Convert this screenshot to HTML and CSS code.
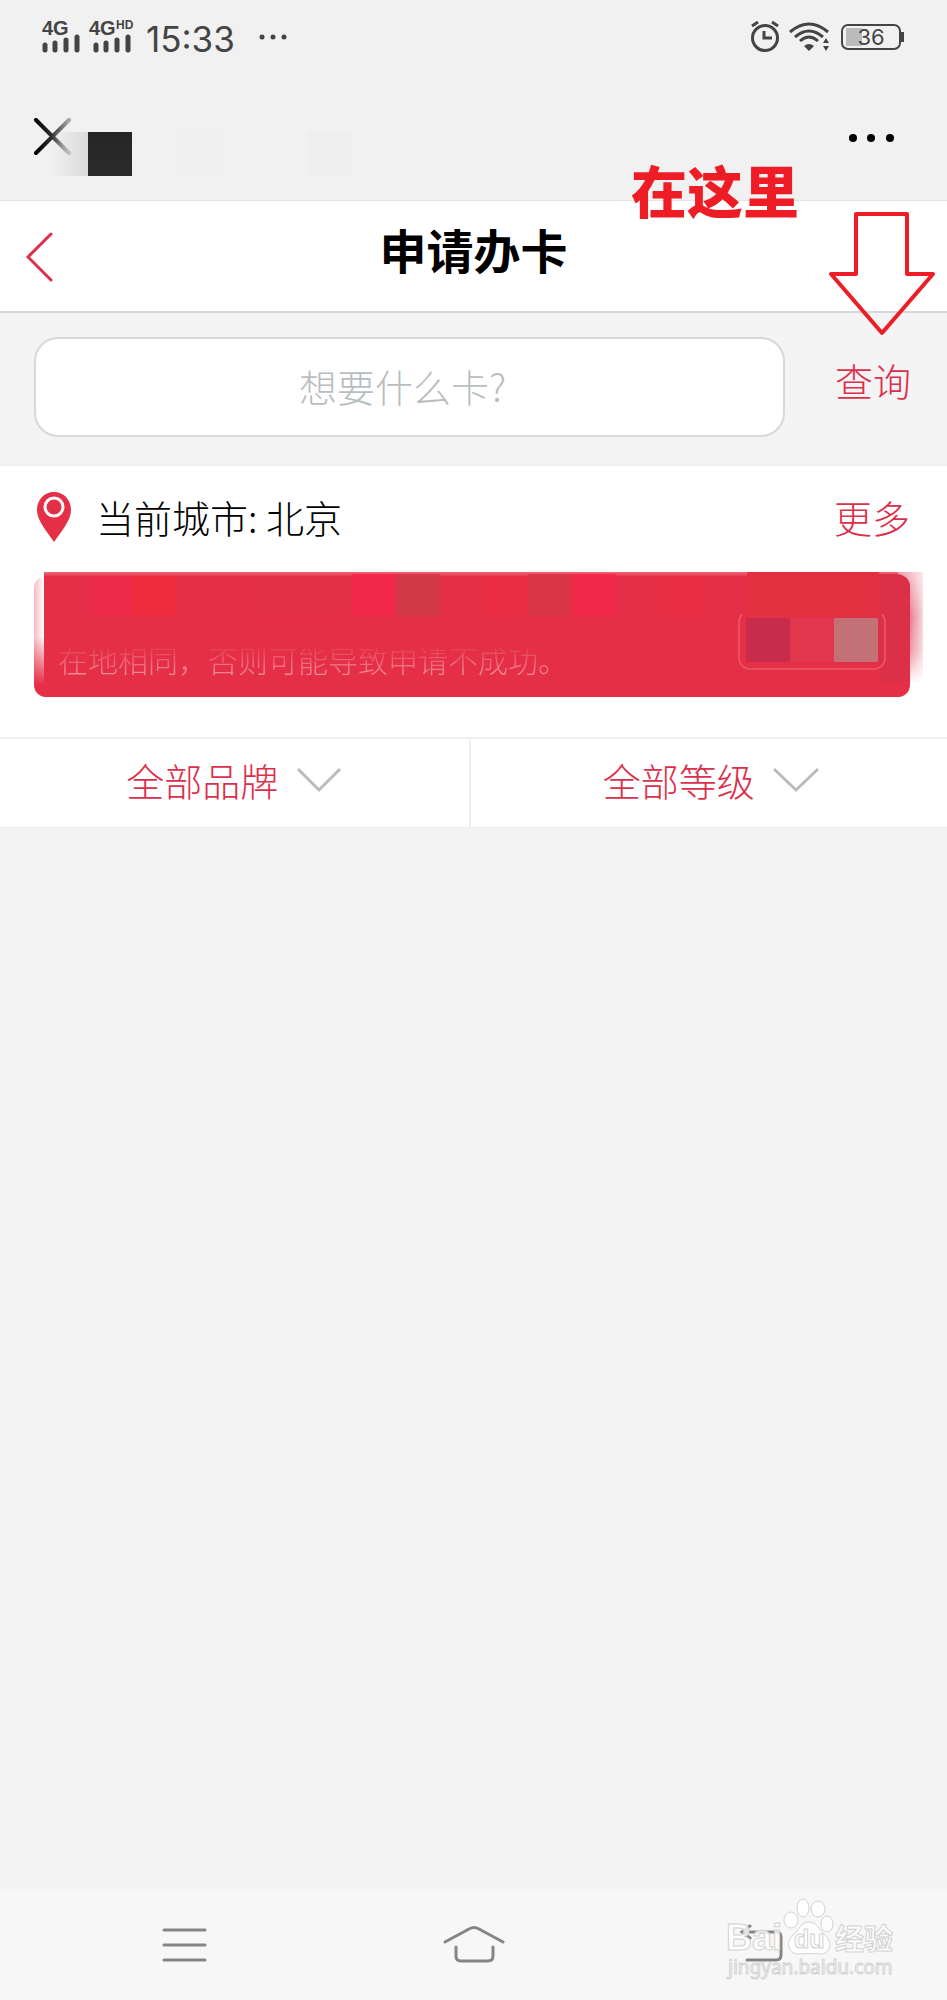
FILE: index.html
```
<!DOCTYPE html>
<html lang="zh-CN">

<head>
    <meta charset="UTF-8">
    <meta name="viewport" content="width=device-width, initial-scale=1.0">
    <title>申请办卡</title>
    <link rel="stylesheet" href="styles.css">
</head>

<body>
    <div class="status">
        <svg class="status__signal" width="94" height="44" viewBox="0 0 94 44">
            <text x="0" y="20" class="signal__text">4G</text>
            <text x="47" y="20" class="signal__text">4G</text>
            <text x="74" y="14" class="signal__hd">HD</text>
            <path d="M3 30v5M13 28v7M24 25v10M35 22v13M54 30v5M64 28v7M75 25v10M86 22v13" stroke="#444" stroke-width="5" stroke-linecap="round" />
        </svg>
        <span class="status__time">15:33</span>
        <svg class="status__more" width="30" height="8" viewBox="0 0 30 8" fill="#444">
            <circle cx="3" cy="4" r="2.500" />
            <circle cx="14" cy="4" r="2.500" />
            <circle cx="25" cy="4" r="2.500" />
        </svg>
        <svg class="status__icons" width="78" height="32" viewBox="0 0 78 32" fill="none" stroke="#444">
            <circle cx="14" cy="17" r="12.500" stroke-width="3" />
            <path d="M13 10v7h8M1 5l6-4M27 5l-6-4" stroke-width="3" />
            <path d="M39 11q19-16 38 0M44 16q14-12 28 0M49 20q9-8 18 0" stroke-width="3" />
            <path d="M53 25q5-4 10 0l-5 5zM72 22l3-5 3 5zM72 25l3 5 3-5z" fill="#444" stroke="none" />
        </svg>
        <div class="battery"><span>36</span></div>
    </div>

    <div class="appbar">
        <button type="button" class="icon-btn" aria-label="关闭">
            <svg width="38" height="38" viewBox="0 0 38 38">
                <defs>
                    <linearGradient id="fade">
                        <stop offset="0" stop-color="#000" />
                        <stop offset="0.500" stop-color="#333" />
                        <stop offset="1" stop-color="#aaa" />
                    </linearGradient>
                </defs>
                <path d="M2 2l33 33M35 2L2 35" stroke="url(#fade)" stroke-width="4" stroke-linecap="round" />
            </svg>
        </button>
        <div class="appbar__mask"></div>
        <button type="button" class="icon-btn" aria-label="更多选项">
            <svg width="46" height="12" viewBox="0 0 46 12">
                <circle cx="4" cy="7" r="4" />
                <circle cx="22" cy="7" r="4" />
                <circle cx="41" cy="7" r="4" />
            </svg>
        </button>
    </div>

    <header class="header">
        <a href="#" class="header__back" aria-label="返回">
            <svg width="27" height="52" viewBox="0 0 27 52" fill="none" stroke="#dc2f4b" stroke-width="3" stroke-linecap="round">
                <path d="M25 3L2 26l23 23" />
            </svg>
        </a>
        <h1>申请办卡</h1>
        <div class="tip">
            <strong>在这里</strong>
            <svg width="108" height="126" viewBox="0 0 108 126" fill="none" stroke="#ee1c25" stroke-width="4" stroke-linejoin="round">
                <path d="M28 3h51v60h26L54 122 3 63h25z" />
            </svg>
        </div>
    </header>

    <form class="search">
        <input type="text" name="card" placeholder="想要什么卡?" aria-label="想要什么卡">
        <button type="submit">查询</button>
    </form>

    <main class="city">
        <div class="city__row">
            <svg width="36" height="52" viewBox="0 0 36 52">
                <path d="M18 1C8 1 1 9 1 19c0 11 11 23 17 32 6-9 17-21 17-32C35 9 28 1 18 1z" fill="#e52f46" />
                <circle cx="18" cy="16" r="9" fill="#e52f46" stroke="#fff" stroke-width="3" />
            </svg>
            <span class="city__name">当前城市: 北京</span>
            <a href="#">更多</a>
        </div>
        <div class="banner">
            <svg class="banner__mask" viewBox="0 0 880 125" preserveAspectRatio="none">
                <defs>
                    <linearGradient id="edge">
                        <stop offset="0" stop-color="#d9304d" />
                        <stop offset="1" stop-color="#d9304d" stop-opacity="0.200" />
                    </linearGradient>
                    <linearGradient id="down" x2="0" y2="1">
                        <stop offset="0" stop-color="#777" />
                        <stop offset="0.400" stop-color="#fff" />
                        <stop offset="0.700" stop-color="#ccc" />
                        <stop offset="1" stop-color="#000" />
                    </linearGradient>
                    <linearGradient id="top" x2="0" y2="1">
                        <stop offset="0" stop-color="#ee6878" />
                        <stop offset="1" stop-color="#e52f46" />
                    </linearGradient>
                    <mask id="edgeFade">
                        <path d="M855 0h25v112h-25z" fill="url(#down)" />
                    </mask>
                </defs>
                <path d="M855 0h25v112h-25z" fill="url(#edge)" mask="url(#edgeFade)" />
                <path d="M0 0h855v5H0z" fill="url(#top)" />
                <path d="M0 4h855q12 0 12 12v96H0z" fill="#e52f46" />
                <path d="M44 4h44v40H44z" fill="#eb2a49" />
                <path d="M88 4h44v40H88z" fill="#ee2c3e" />
                <path d="M220 4h88v40h-88z" fill="#e23046" />
                <path d="M308 2h44v42h-44z" fill="#f12849" />
                <path d="M352 2h44v42h-44z" fill="#d23846" />
                <path d="M440 4h44v40h-44z" fill="#ea2d42" />
                <path d="M484 2h44v42h-44z" fill="#d93546" />
                <path d="M528 2h44v42h-44z" fill="#f02849" />
                <path d="M616 4h44v40h-44z" fill="#e92e44" />
                <path d="M704 0h132v44H704z" fill="#e23040" />
                <path d="M836 2h19q12 2 12 14v94h-31z" fill="#dc3049" />
            </svg>
            <p>在地相同，否则可能导致申请不成功。</p>
            <button type="button" class="banner__btn" aria-label="切换城市">
                <i></i><i></i><i></i>
            </button>
        </div>
    </main>

    <div class="filters">
        <button type="button">全部品牌
            <svg width="46" height="28" viewBox="0 0 46 28" fill="none" stroke="#bbb" stroke-width="3">
                <path d="M2 3l21 21L44 3" />
            </svg>
        </button>
        <button type="button">全部等级
            <svg width="46" height="28" viewBox="0 0 46 28" fill="none" stroke="#bbb" stroke-width="3">
                <path d="M1 3l22 21L45 3" />
            </svg>
        </button>
    </div>

    <nav class="nav">
        <button type="button" aria-label="菜单">
            <svg width="64" height="44" viewBox="0 0 64 44">
                <path d="M12 7h41M12 22h41M12 37h41" />
            </svg>
        </button>
        <button type="button" aria-label="主页">
            <svg width="64" height="44" viewBox="0 0 64 44">
                <path d="M3 19L27 6q5-3 10 0l24 13M14 24v9q0 5 5 5h27q5 0 5-5v-9" />
            </svg>
        </button>
        <button type="button" aria-label="返回">
            <svg width="64" height="44" viewBox="0 0 64 44">
                <path d="M19 3l-8 6 8 6M11 9h34q5 0 5 5v18q0 5-5 5H16" />
            </svg>
        </button>
        <svg class="logo" width="176" height="86" viewBox="0 0 176 86">
            <g fill="#fff" fill-opacity="0.800" stroke="#d2d2d2" stroke-width="1">
                <text x="0" y="52" class="logo__bai">Bai</text>
                <ellipse cx="65" cy="22" rx="7" ry="8" />
                <ellipse cx="77" cy="10" rx="6" ry="9" />
                <ellipse cx="92" cy="11" rx="7" ry="8" />
                <ellipse cx="101" cy="26" rx="6" ry="8" />
                <path d="M83 24c-8 0-10 8-16 13-7 6-6 18 5 19 5 0 16-1 22 0 10 0 13-11 6-18-7-6-9-14-17-14z" />
                <text x="68" y="50" class="logo__du">du</text>
                <text x="109" y="52" class="logo__cn">经验</text>
                <text x="2" y="76" class="logo__url">jingyan.baidu.com</text>
            </g>
        </svg>
    </nav>
</body>

</html>
```

FILE: styles.css
```
* {
    margin: 0;
    padding: 0;
    box-sizing: border-box;
}

body {
    min-height: 100vh;
    display: flex;
    flex-direction: column;
    background: #f4f4f4;
    font-family: "Noto Sans CJK SC", sans-serif;
    font-size: 38px;
    font-weight: 300;
    line-height: 56px;
    color: #000;
}

button,
input {
    font: inherit;
    border: 0;
    background: none;
}

button {
    cursor: pointer;
}

a {
    color: #dc2f4b;
    text-decoration: none;
}

svg {
    display: block;
    flex-shrink: 0;
}

/* phone status bar */
.status {
    display: flex;
    align-items: center;
    height: 74px;
    padding: 0 46px 0 42px;
    background: #f1f1f1;
    color: #444;
    font-family: Inter, sans-serif;
    font-weight: 400;
}

.signal__text {
    font: bold 20px "Liberation Sans", sans-serif;
    fill: #444;
}

.signal__hd {
    font: bold 12px "Liberation Sans", sans-serif;
    fill: #444;
}

.status__time {
    margin-left: 10px;
    padding-top: 4px;
    font-size: 35px;
    font-weight: 400;
}

.status__more {
    margin-left: 24px;
}

.status__icons {
    margin-left: auto;
}

.battery {
    position: relative;
    width: 60px;
    height: 26px;
    margin-left: 12px;
    border: 2px solid #444;
    border-radius: 7px;
    background: linear-gradient(#bbb, #bbb) 3px 2px / 16px 18px no-repeat;
    font-size: 22px;
    line-height: 22px;
    text-align: center;
}

.battery::after {
    content: "";
    position: absolute;
    right: -5px;
    top: 6px;
    width: 3px;
    height: 10px;
    background: #444;
}

/* webview bar */
.appbar {
    display: flex;
    align-items: center;
    height: 127px;
    padding: 0 52px 0 34px;
    background: #f1f1f1;
    border-bottom: 1px solid #e4e4e4;
}

.icon-btn {
    height: 38px;
}

.appbar__mask {
    align-self: flex-end;
    width: 300px;
    height: 44px;
    margin: 0 auto 24px -20px;
    background:
        linear-gradient(#262626, #2b2b2b) 36px 0 / 44px 44px no-repeat,
        linear-gradient(#eee, #eee) 256px 0 / 44px 44px no-repeat,
        linear-gradient(#f0f0f0, #f0f0f0) 124px 0 / 44px 40px no-repeat,
        linear-gradient(90deg, #dadada00, #dadada) 0 0 / 36px 44px no-repeat;
}

.header {
    position: relative;
    display: flex;
    align-items: center;
    justify-content: center;
    height: 112px;
    padding-bottom: 14px;
    background: #fff;
    border-bottom: 2px solid #d8d8d8;
}

.header h1 {
    font-size: 47px;
    font-weight: 700;
}

.header__back {
    position: absolute;
    left: 26px;
    top: 30px;
}

.tip {
    position: absolute;
    right: 11px;
    top: -48px;
    display: flex;
    gap: 29px;
    color: #ee1c25;
    pointer-events: none;
}

.tip strong {
    font-size: 56px;
    font-weight: 900;
    line-height: 72px;
}

.tip svg {
    margin-top: 58px;
}

.search {
    display: flex;
    align-items: center;
    gap: 50px;
    padding: 24px 36px 27px 34px;
    border-bottom: 2px solid #eee;
}

.search input {
    flex: 1;
    min-width: 0;
    height: 100px;
    padding: 0 14px 4px 0;
    border: 2px solid #d8d8d8;
    border-radius: 24px;
    background: #fff;
    text-align: center;
}

.search input::placeholder {
    color: #b8bdbf;
}

.search button {
    padding-bottom: 14px;
    color: #dc2f4b;
}

.city {
    padding: 0 37px 40px 34px;
    background: #fff;
}

.city__row {
    display: flex;
    align-items: center;
    height: 110px;
    padding: 0 0 8px 2px;
}

.city__name {
    margin: 0 auto 0 24px;
}

/* notice with the masked upper part */
.banner {
    position: relative;
    display: flex;
    align-items: flex-end;
    justify-content: space-between;
    height: 121px;
    padding: 0 24px 16px 24px;
    border-radius: 12px;
    background:
        linear-gradient(#e52f4600 50%, #e52f46 90%),
        linear-gradient(90deg, #f6bcc4, #fff 10px, #e52f46 20px);
}

.banner__mask {
    position: absolute;
    left: 10px;
    top: -4px;
    width: calc(100% + 3px);
    height: 125px;
}

.banner p {
    position: relative;
    font-size: 30px;
    line-height: 44px;
    background: linear-gradient(#e8405500 15%, #f28d98 85%);
    background-clip: text;
    -webkit-background-clip: text;
    color: transparent;
}

.banner__btn {
    position: relative;
    display: flex;
    height: 60px;
    margin-bottom: 11px;
    padding: 6px 6px 8px;
    border: 2px solid #e9505f;
    border-top-color: transparent;
    border-radius: 12px;
}

.banner__btn i {
    width: 44px;
    height: 44px;
    background: #c92c4a;
}

.banner__btn i:nth-child(2) {
    background: #e2364d;
}

.banner__btn i:nth-child(3) {
    background: #c27276;
}

.filters {
    display: grid;
    grid-template-columns: 98fr 100fr;
    background: #fff;
    border-top: 2px solid #eee;
    border-bottom: 1px solid #eee;
}

.filters button {
    display: flex;
    align-items: center;
    justify-content: center;
    gap: 18px;
    height: 88px;
    padding-bottom: 6px;
    color: #dc2f4b;
}

.filters button + button {
    padding-left: 4px;
    border-left: 2px solid #eee;
}

.nav {
    position: relative;
    display: flex;
    justify-content: space-between;
    height: 109px;
    margin-top: auto;
    padding: 32px 152px 0;
    background: #f7f7f7;
}

.nav button {
    height: 44px;
}

.nav button svg {
    fill: none;
    stroke: #858585;
    stroke-width: 3;
    stroke-linecap: round;
}

.logo {
    position: absolute;
    right: 45px;
    top: 7px;
}

.logo__bai {
    font: bold 36px "Liberation Sans", sans-serif;
}

.logo__du {
    font: bold 25px "Liberation Sans", sans-serif;
}

.logo__cn {
    font: bold 29px "Noto Sans CJK SC", sans-serif;
}

.logo__url {
    font: 19px "Noto Sans", sans-serif;
}
```
